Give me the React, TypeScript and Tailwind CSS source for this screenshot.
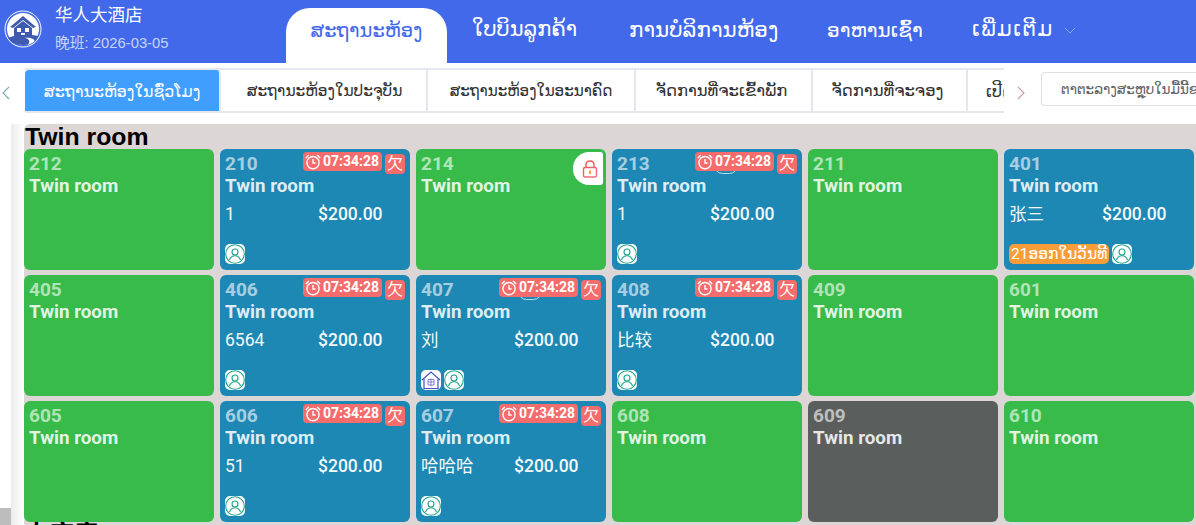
const FONT = "font-['Roboto','Noto_Sans_CJK_SC','DejaVu_Sans',sans-serif]";

function Logo() {
  return (
    <svg width="38" height="38" viewBox="0 0 38 38" className="shrink-0">
      <circle cx="19" cy="19" r="18" fill="none" stroke="#fff" strokeWidth="1" />
      <circle cx="19" cy="19" r="16" fill="#fff" />
      <path d="M19 6 L6 17 L9 18 L19 10 L29 18 L32 17 Z" fill="#3f5bb0" />
      <path d="M10 18 L19 11 L28 18 V28 H10 Z" fill="#3f5bb0" />
      <rect x="13" y="18" width="4" height="4" fill="#fff" />
      <rect x="21" y="18" width="4" height="4" fill="#fff" />
      <rect x="17" y="23" width="4" height="5" fill="#fff" />
      <path d="M4 28 C12 24 26 24 34 26 C30 33 24 35 19 35 C12 35 7 32 4 28 Z" fill="#3f5bb0" />
      <path d="M20 28 C24 28 27 30 24 35 L30 32 C32 29 26 27 20 28 Z" fill="#fff" />
    </svg>
  );
}

function Person() {
  return (
    <span className="w-5 h-5 rounded-[5px] bg-white flex items-center justify-center shrink-0">
      <svg width="20" height="20" viewBox="0 0 20 20" fill="none" stroke="#1fa28c" strokeWidth="1.1">
        <circle cx="10" cy="10" r="9.3" />
        <circle cx="10" cy="8" r="3" />
        <path d="M4.5 16 C5.5 12.8 7.5 11.8 10 11.8 C12.5 11.8 14.5 12.8 15.5 16" />
      </svg>
    </span>
  );
}

function HouseIcon() {
  return (
    <span className="w-5 h-5 rounded-[5px] bg-white flex items-center justify-center shrink-0">
      <svg width="20" height="20" viewBox="0 0 20 20" fill="none" stroke="#3f55c8" strokeWidth="1.2">
        <path d="M1 10 L10 2 L19 10" />
        <path d="M3 9 V18.5 H17 V9" />
        <path d="M7 9.5 H13 V15 H7 Z M7 12 H13 M10 8.5 V16.5" stroke="#7a6fe0" strokeWidth="0.9" />
      </svg>
    </span>
  );
}

function Clock() {
  return (
    <svg width="16" height="16" viewBox="0 0 16 16" fill="none" stroke="#fff" strokeWidth="1.4" className="shrink-0">
      <circle cx="8" cy="8.6" r="6.1" />
      <path d="M8 5 V9 H10.6" />
      <path d="M0.8 4 L3.8 1 M15.2 4 L12.2 1" />
    </svg>
  );
}

function Lock() {
  return (
    <svg width="16" height="18" viewBox="0 0 16 18" fill="none" strokeWidth="1.4">
      <defs>
        <linearGradient id="lockGrad" x1="0" y1="0" x2="1" y2="1">
          <stop offset="0" stopColor="#f25a5a" />
          <stop offset="1" stopColor="#f0708a" />
        </linearGradient>
      </defs>
      <rect x="1.5" y="7.5" width="13" height="9.5" rx="1.5" stroke="url(#lockGrad)" />
      <path d="M4 7.5 V4.8 C4 2.4 5.8 1 8 1 C10.2 1 12 2.4 12 4.8 V7.5" stroke="#f25a5a" />
      <rect x="7" y="10.5" width="2" height="3.5" fill="#f0a040" />
    </svg>
  );
}

type Room = {
  no: string;
  kind?: "free" | "busy" | "dark";
  guest?: string;
  timer?: boolean;
  lock?: boolean;
  arc?: boolean;
  out?: boolean;
  house?: boolean;
};

const rooms: Room[] = [
  { no: "212" },
  { no: "210", kind: "busy", guest: "1", timer: true },
  { no: "214", lock: true },
  { no: "213", kind: "busy", guest: "1", timer: true, arc: true },
  { no: "211" },
  { no: "401", kind: "busy", guest: "张三", out: true },
  { no: "405" },
  { no: "406", kind: "busy", guest: "6564", timer: true },
  { no: "407", kind: "busy", guest: "刘", timer: true, arc: true, house: true },
  { no: "408", kind: "busy", guest: "比较", timer: true },
  { no: "409" },
  { no: "601" },
  { no: "605" },
  { no: "606", kind: "busy", guest: "51", timer: true },
  { no: "607", kind: "busy", guest: "哈哈哈", timer: true },
  { no: "608" },
  { no: "609", kind: "dark" },
  { no: "610" },
];

function Card({ r }: { r: Room }) {
  const bg = r.kind === "busy" ? "bg-[#1e88b4]" : r.kind === "dark" ? "bg-[#5a5e5d]" : "bg-[#38bb4a]";
  return (
    <div className={`relative h-[121px] rounded-[6px] overflow-hidden ${bg} text-white pl-[5px] flex flex-col`}>
      <div className="text-[19px] leading-[21px] font-bold opacity-60 mt-[4px]">{r.no}</div>
      <div className="text-[18.8px] leading-[21px] font-bold opacity-85 mt-[2px]">Twin room</div>
      {r.guest && (
        <div className="flex text-[17.5px] leading-[24px] mt-[5px] opacity-95">
          <span className="w-[93px]">{r.guest}</span>
          <span className="font-medium">$200.00</span>
        </div>
      )}
      {r.kind === "busy" && (
        <div className="mt-auto mb-[6px] flex items-center gap-[3px]">
          {r.out && (
            <span className="h-5 w-[100px] pl-[2px] rounded-[5px] bg-[#f99d38] text-[15.5px] leading-5 whitespace-nowrap">
              21ອອກໃນວັນທີ
            </span>
          )}
          {r.house && <HouseIcon />}
          <Person />
        </div>
      )}
      {r.arc && (
        <span className="absolute top-[8px] left-[102px] w-6 h-[17px] rounded-full border border-white/70" />
      )}
      {r.timer && (
        <div className="absolute top-[3px] right-0 flex items-start">
          <span className="h-[19px] w-[79px] rounded-[4px] bg-[#f56c6c] flex items-center gap-[2px] pl-[2px] text-[14px] font-bold">
            <Clock />
            07:34:28
          </span>
          <span className="mt-[2px] ml-[3px] mr-[5px] w-5 h-5 rounded-[4px] bg-[#f56c6c] text-[16px] leading-5 text-center">
            欠
          </span>
        </div>
      )}
      {r.lock && (
        <div className="absolute top-[3px] right-[3px] w-[30px] h-[33px] pl-[3px] bg-white rounded-l-[16px] rounded-r-[3px] flex items-center justify-center">
          <Lock />
        </div>
      )}
    </div>
  );
}

const subs = [
  ["ສະຖານະຫ້ອງໃນຊົ່ວໂມງ", "w-[196px] text-[15.8px]"],
  ["ສະຖານະຫ້ອງໃນປະຈຸບັນ", "w-[207px] text-[15.4px] pl-[2px]"],
  ["ສະຖານະຫ້ອງໃນອະນາຄົດ", "w-[208px] text-[15.1px]"],
  ["ຈັດການທີ່ຈະເຂົ້າພັກ", "w-[177px] text-[16.4px] pr-[4px]"],
  ["ຈັດການທີ່ຈະຈອງ", "w-[155px] text-[16.4px] pr-[4px]"],
];

export default function App() {
  return (
    <div className={`w-[1196px] h-[525px] overflow-hidden bg-white ${FONT}`}>
      <header className="h-[63px] bg-[#4169e9] flex text-white">
        <div className="w-[286px] flex pl-[4px] pt-[5px]">
          <div className="pt-[5px]"><Logo /></div>
          <div className="ml-[13px]">
            <div className="text-[17.5px] leading-[20px]">华人大酒店</div>
            <div className="text-[14.8px] leading-[20px] mt-[8px] opacity-70 font-['Liberation_Sans','Noto_Sans_CJK_SC',sans-serif]">晚班: 2026-03-05</div>
          </div>
        </div>
        <div className="mt-[8px] h-[55px] w-[161px] rounded-t-[24px] bg-white text-[#4169e9] text-[19.5px] pb-[9px] flex items-center justify-center">
          ສະຖານະຫ້ອງ
        </div>
        <nav className="flex h-[60px] items-center pl-[25px]">
          <span className="w-[157px] text-[21px] whitespace-nowrap">ໃບບິນລູກຄ້າ</span>
          <span className="w-[198px] text-[21.5px] whitespace-nowrap">ການບໍລິການຫ້ອງ</span>
          <span className="w-[145px] text-[20px] whitespace-nowrap">ອາຫານເຊົ້າ</span>
          <span className="whitespace-nowrap flex items-center text-[21px] tracking-[1.4px]">
            ເພີ່ມເຕີມ
            <svg width="12" height="7" viewBox="0 0 12 7" fill="none" stroke="#8fa5ee" strokeWidth="1" className="ml-[10px]">
              <path d="M1 1 L6 6 L11 1" />
            </svg>
          </span>
        </nav>
      </header>

      <div className="h-[50px] flex">
        <div className="w-[25px] flex items-center pl-[2px] pt-[9px] shrink-0">
          <svg width="8" height="14" viewBox="0 0 8 14" fill="none" stroke="#7fa6ae" strokeWidth="1.1">
            <path d="M7 1 L1 7 L7 13" />
          </svg>
        </div>
        <div className="w-[979px] mt-[5px] h-[45px] border-t-2 border-b-2 border-[#e4e7ed] flex overflow-hidden text-[#303133] shrink-0">
          {subs.map(([s, w], i) => (
            <div
              key={s}
              className={`${w} shrink-0 whitespace-nowrap flex items-center justify-center pt-[2px] border-r-2 border-[#e4e7ed] ${
                i === 0 ? "bg-[#409eff] text-white rounded-t-[4px]" : ""
              }`}
            >
              {s}
            </div>
          ))}
          <div className="pl-[18px] pt-[2px] text-[16px] flex items-center whitespace-nowrap">ເປີດ</div>
        </div>
        <div className="w-[37px] shrink-0 flex items-center pl-[13px] pt-[9px]">
          <svg width="8" height="14" viewBox="0 0 8 14" fill="none" stroke="#c79aa8" strokeWidth="1.1">
            <path d="M1 1 L7 7 L1 13" />
          </svg>
        </div>
        <div className="mt-[9px] h-[34px] flex-1 border border-[#dcdfe6] border-r-0 rounded-l-[4px] pl-[19px] flex items-center text-[13.5px] text-[#606266] whitespace-nowrap overflow-hidden">
          ຕາຕະລາງສະຫຼຸບໃນມື້ນີ້ຂອງຫ້ອງ
        </div>
      </div>

      <div className="h-[412px] flex pt-[11px]">
        <div className="w-[11px] shrink-0 flex flex-col bg-white rounded-tr-[6px]">
          <div className="flex-1" />
          <div className="h-[17px] bg-[#bdbdbd]" />
        </div>
        <div className="w-[13px] shrink-0 bg-gradient-to-r from-[#ececec] to-white" />
        <div className="flex-1 bg-[#dcd6d6] rounded-tl-[6px] pr-[2px] overflow-hidden">
          <h2 className="pl-[1px] text-[24.8px] leading-[25px] font-bold text-black font-['Liberation_Sans',sans-serif]">Twin room</h2>
          <div className="grid grid-cols-[190px_190px_190px_190px_190px_190px] gap-x-[6px] gap-y-[5px]">
            {rooms.map((r) => (
              <Card key={r.no} r={r} />
            ))}
          </div>
          <h2 className="text-[25px] leading-[25px] font-bold text-black mt-[-2px] font-['Noto_Sans_CJK_SC',sans-serif]">大床房</h2>
        </div>
      </div>
    </div>
  );
}
